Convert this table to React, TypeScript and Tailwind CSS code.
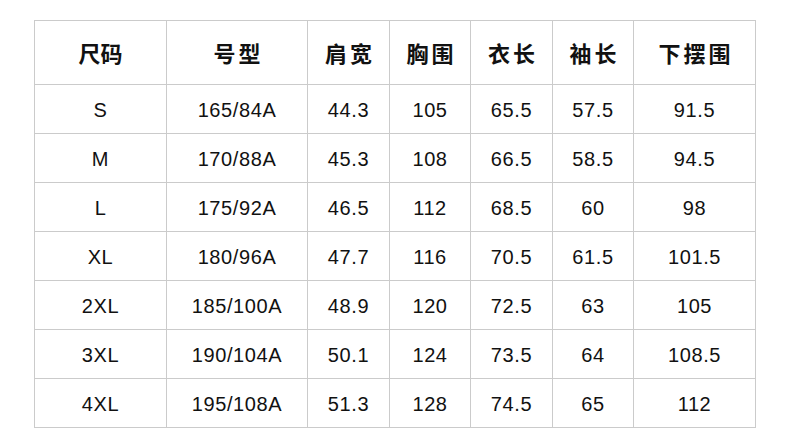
import React from "react";

const headers = ["尺码", "号型", "肩宽", "胸围", "衣长", "袖长", "下摆围"];
const rows = [
  ["S", "165/84A", "44.3", "105", "65.5", "57.5", "91.5"],
  ["M", "170/88A", "45.3", "108", "66.5", "58.5", "94.5"],
  ["L", "175/92A", "46.5", "112", "68.5", "60", "98"],
  ["XL", "180/96A", "47.7", "116", "70.5", "61.5", "101.5"],
  ["2XL", "185/100A", "48.9", "120", "72.5", "63", "105"],
  ["3XL", "190/104A", "50.1", "124", "73.5", "64", "108.5"],
  ["4XL", "195/108A", "51.3", "128", "74.5", "65", "112"],
];

export default function App() {
  return (
    <div className="w-[790px] h-[428px] bg-white pt-[20px] pl-[34px]">
      <div className="w-[722px] grid grid-cols-[131px_140px_81px_80px_81px_80px_121px] grid-rows-[63px_repeat(7,48px)] gap-px p-px bg-[#cbcbcb]">
        {headers.map((h, i) => (
          <div
            key={"h" + i}
            className={`bg-white flex items-center justify-center text-[22px] font-bold text-[#111] ${i === 0 ? "tracking-[0px]" : "tracking-[3px] pl-[3px]"}`}
            style={{ fontFamily: '"Noto Sans CJK SC", sans-serif' }}
          >
            {h}
          </div>
        ))}
        {rows.map((r, ri) =>
          r.map((c, ci) => (
            <div
              key={ri + "-" + ci}
              className="bg-white flex items-center justify-center text-[20px] tracking-[0.6px] text-[#111] pt-[1px]"
              style={{ fontFamily: '"Liberation Sans", Arial, sans-serif' }}
            >
              {c}
            </div>
          ))
        )}
      </div>
    </div>
  );
}
